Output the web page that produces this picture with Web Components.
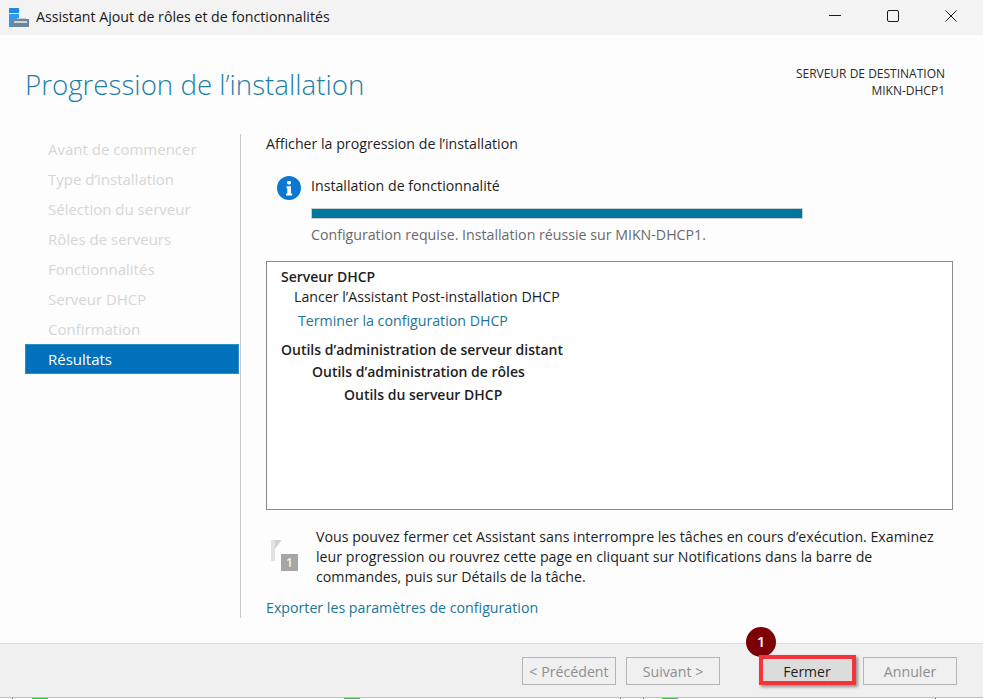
<!DOCTYPE html>
<html lang="fr">
<head>
<meta charset="utf-8">
<title>Assistant Ajout de rôles et de fonctionnalités</title>
<style>
html, body { margin: 0; height: 100%; }
body { font-family: "Open Sans", "Noto Sans", sans-serif; color: #1e1e1e; background: #fdfdfd; }
</style>
</head>
<body>
<wizard-window>
  <title-bar slot="title">Assistant Ajout de rôles et de fonctionnalités</title-bar>
  <page-header slot="header" heading="Progression de l’installation"></page-header>
  <step-list slot="steps">
    <step-item>Avant de commencer</step-item>
    <step-item>Type d’installation</step-item>
    <step-item>Sélection du serveur</step-item>
    <step-item>Rôles de serveurs</step-item>
    <step-item>Fonctionnalités</step-item>
    <step-item>Serveur DHCP</step-item>
    <step-item>Confirmation</step-item>
    <step-item active>Résultats</step-item>
  </step-list>
  <results-pane slot="content"></results-pane>
  <wizard-footer slot="footer"></wizard-footer>
</wizard-window>

<script>
class WizardWindow extends HTMLElement {
    constructor() {
        super();
        this.attachShadow({ mode: 'open' });
    }
    connectedCallback() {
        this.shadowRoot.innerHTML = `
            <style>
                :host { display: flex; flex-direction: column; height: 699px; overflow: hidden; }
                .body { display: flex; height: 484px; margin-top: 19px; }
                .strip { height: 2px; margin-top: auto; background: #fdfdfd; border-top: 1px solid #bdbdbd; box-sizing: border-box; position: relative; }
                .strip i { position: absolute; top: 0; width: 16px; height: 1px; background: #3fc23f; }
                .strip b { position: absolute; top: 0; width: 1px; height: 1px; background: #555; }
            </style>
            <slot name="title"></slot>
            <slot name="header"></slot>
            <div class="body">
                <slot name="steps"></slot>
                <slot name="content"></slot>
            </div>
            <slot name="footer"></slot>
            <div class="strip">
                <b style="left:12px"></b><i style="left:32px"></i>
                <b style="left:620px"></b><b style="left:643px"></b><b style="left:935px"></b>
                <i style="left:344px"></i><i style="left:662px"></i>
            </div>
        `;
    }
}

class TitleBar extends HTMLElement {
    constructor() {
        super();
        this.attachShadow({ mode: 'open' });
    }
    connectedCallback() {
        this.shadowRoot.innerHTML = `
            <style>
                :host { display: flex; align-items: center; height: 35px; box-sizing: border-box; padding-bottom: 3px; background: #f3f3f3; font-size: 14.2px; color: #1a1a1a; }
                .logo { margin-left: 9px; margin-right: 7px; margin-top: 3px; }
                .text { flex: 1; }
                .ctl { width: 58px; display: flex; align-items: center; justify-content: center; }
            </style>
            <svg class="logo" width="20" height="20" viewBox="0 0 20 20">
                <rect x="0" y="0" width="10" height="5" fill="#1e8ae6"/>
                <rect x="0" y="6" width="10" height="13" fill="#2f9bec"/>
                <rect x="3" y="11" width="7" height="8" fill="#1b6fa8"/>
                <rect x="8" y="10" width="9" height="2" fill="#c3ced6"/>
                <rect x="3" y="11" width="17" height="8" fill="#6d8698"/>
                <rect x="5" y="13" width="13" height="2" fill="#c9d5de"/>
            </svg>
            <span class="text"><slot></slot></span>
            <span class="ctl"><svg width="12" height="12" viewBox="0 0 12 12"><path d="M0 5.500h12" stroke="#1a1a1a" fill="none"/></svg></span>
            <span class="ctl"><svg width="12" height="12" viewBox="0 0 12 12"><rect x="0.5" y="0.5" width="11" height="11" rx="1.5" stroke="#1a1a1a" fill="none"/></svg></span>
            <span class="ctl" style="margin-right:3px"><svg width="12" height="12" viewBox="0 0 12 12"><path d="M0.500 0.500l11 11M11.500 0.500l-11 11" stroke="#1a1a1a" fill="none"/></svg></span>
        `;
    }
}

class PageHeader extends HTMLElement {
    constructor() {
        super();
        this.attachShadow({ mode: 'open' });
    }
    connectedCallback() {
        this.shadowRoot.innerHTML = `
            <style>
                :host { display: flex; justify-content: space-between; height: 80px; padding: 0 38px 0 25px; }
                h1 { margin: 17px 0 0; font-size: 27.7px; font-weight: 300; line-height: 64px; height: 63px; color: #1b7fa8; }
                .dest { margin-top: 30px; text-align: right; font-size: 12px; line-height: 17px; color: #2a2a2a; }
            </style>
            <h1>${this.getAttribute('heading')}</h1>
            <div class="dest">SERVEUR DE DESTINATION<br>MIKN-DHCP1</div>
        `;
    }
}

class StepList extends HTMLElement {
    constructor() {
        super();
        this.attachShadow({ mode: 'open' });
    }
    connectedCallback() {
        this.shadowRoot.innerHTML = `
            <style>
                :host { display: block; box-sizing: border-box; width: 241px; padding-left: 25px; padding-right: 1px; border-right: 1px solid #c8c8c8; }
            </style>
            <slot></slot>
        `;
    }
}

class StepItem extends HTMLElement {
    constructor() {
        super();
        this.attachShadow({ mode: 'open' });
    }
    connectedCallback() {
        this.shadowRoot.innerHTML = `
            <style>
                :host { display: block; height: 30px; line-height: 31px; padding-left: 23px; font-size: 15px; color: #d6d6d6; }
                :host([active]) { background: #0072bc; color: #fff; box-shadow: inset 0 0 0 1px #2f8bc7; }
            </style>
            <slot></slot>
        `;
    }
}

class ResultsPane extends HTMLElement {
    constructor() {
        super();
        this.attachShadow({ mode: 'open' });
    }
    connectedCallback() {
        this.shadowRoot.innerHTML = `
            <style>
                :host { display: block; flex: 1; padding: 0 30px 0 25px; font-size: 14.2px; color: #1e1e1e; }
                .lead { height: 20px; line-height: 20px; }
                .status { display: flex; margin: 22px 0 0 11px; }
                .info { flex: none; margin-right: 10px; }
                .status-main { flex: none; width: 492px; }
                .status-title { line-height: 20px; height: 20px; }
                .bar { height: 9px; margin-top: 12px; background: #00789c; border: 1px solid #c8cdd0; }
                .status-sub { margin-top: 6px; height: 20px; line-height: 20px; color: #6a6a6a; }
                .box { box-sizing: border-box; height: 249px; margin-top: 16px; padding: 5px 14px; border: 1px solid #8b8b8b; background: #fff; }
                .row { height: 20px; line-height: 20px; }
                .b { font-weight: 600; font-size: 14px; }
                .a { color: #1a7696; }
                .note { display: flex; margin-top: 17px; }
                .flag { flex: none; margin: 13px 18px 0 5px; }
                .note p { margin: 0; width: 632px; line-height: 20px; }
                .export { display: block; margin-top: 11px; line-height: 20px; color: #1a7696; }
            </style>
            <div class="lead">Afficher la progression de l’installation</div>
            <div class="status">
                <svg class="info" width="24" height="24" viewBox="0 0 24 24">
                    <circle cx="12" cy="12" r="12" fill="#0a78d2"/>
                    <rect x="10" y="5" width="4" height="3.400" rx="1.400" fill="#fff"/>
                    <path d="M9.500 10.200h4.500v7.200h1.200v2H9v-2h1.300v-5.200H9.500z" fill="#fff"/>
                </svg>
                <div class="status-main">
                    <div class="status-title">Installation de fonctionnalité</div>
                    <div class="bar"></div>
                    <div class="status-sub">Configuration requise. Installation réussie sur MIKN-DHCP1.</div>
                </div>
            </div>
            <div class="box">
                <div class="row b">Serveur DHCP</div>
                <div class="row" style="padding-left:13px">Lancer l’Assistant Post-installation DHCP</div>
                <div class="row a" style="padding-left:17px;margin-top:4px">Terminer la configuration DHCP</div>
                <div class="row b" style="margin-top:9px">Outils d’administration de serveur distant</div>
                <div class="row b" style="padding-left:31px;margin-top:2px">Outils d’administration de rôles</div>
                <div class="row b" style="padding-left:63px;margin-top:3px">Outils du serveur DHCP</div>
            </div>
            <div class="note">
                <svg class="flag" width="27" height="33" viewBox="0 0 27 33">
                    <path d="M0 0h4v21H0z" fill="#e2e2e2"/>
                    <path d="M4 0h6.500L4 9z" fill="#d2d2d2"/>
                    <rect x="10" y="14" width="17" height="17" fill="#a6a6a6"/>
                    <text x="18.500" y="27" text-anchor="middle" font-size="12" font-weight="600" fill="#f2f2f2">1</text>
                </svg>
                <p>Vous pouvez fermer cet Assistant sans interrompre les tâches en cours d’exécution. Examinez leur progression ou rouvrez cette page en cliquant sur Notifications dans la barre de commandes, puis sur Détails de la tâche.</p>
            </div>
            <span class="export">Exporter les paramètres de configuration</span>
        `;
    }
}

class WizardFooter extends HTMLElement {
    constructor() {
        super();
        this.attachShadow({ mode: 'open' });
    }
    connectedCallback() {
        this.shadowRoot.innerHTML = `
            <style>
                :host { display: flex; justify-content: flex-end; align-items: center; gap: 10px; box-sizing: border-box; height: 54px; margin-top: 25px; padding: 1px 26px 0 0; background: #f0f0f0; border-top: 1px solid #dcdcdc; }
            </style>
            <wizard-button disabled>&lt; Précédent</wizard-button>
            <wizard-button disabled style="margin-right:31px">Suivant &gt;</wizard-button>
            <wizard-button primary style="margin-right:-2px">Fermer</wizard-button>
            <wizard-button disabled>Annuler</wizard-button>
        `;
    }
}

class WizardButton extends HTMLElement {
    constructor() {
        super();
        this.attachShadow({ mode: 'open' });
    }
    connectedCallback() {
        this.shadowRoot.innerHTML = `
            <style>
                :host { display: flex; align-items: center; justify-content: center; position: relative; box-sizing: border-box; width: 94px; height: 28px; font-size: 14.2px; border: 1px solid #b4b4b4; background: #f0f0f0; color: #8e8e8e; }
                :host([primary]) { background: #dcdcdc; color: #1e1e1e; font-size: 14px; padding-right: 2px; }
                .mark { display: none; position: absolute; top: -3px; left: -3px; right: -2px; bottom: -1px; border: 4px solid #f4333a; box-shadow: 2px 2px 3px rgba(0,0,0,.4); }
                :host([primary]) .mark { display: block; }
                .badge { display: none; position: absolute; left: -16px; top: -31px; width: 30px; height: 30px; padding-bottom: 2px; box-sizing: border-box; border-radius: 50%; background: #7c0005; color: #fff; font-size: 15px; font-weight: 600; align-items: center; justify-content: center; }
                :host([primary]) .badge { display: flex; }
            </style>
            <span class="badge">1</span>
            <span class="mark"></span>
            <slot></slot>
        `;
    }
}

customElements.define('wizard-window', WizardWindow);
customElements.define('title-bar', TitleBar);
customElements.define('page-header', PageHeader);
customElements.define('step-list', StepList);
customElements.define('step-item', StepItem);
customElements.define('results-pane', ResultsPane);
customElements.define('wizard-footer', WizardFooter);
customElements.define('wizard-button', WizardButton);
</script>
</body>
</html>
